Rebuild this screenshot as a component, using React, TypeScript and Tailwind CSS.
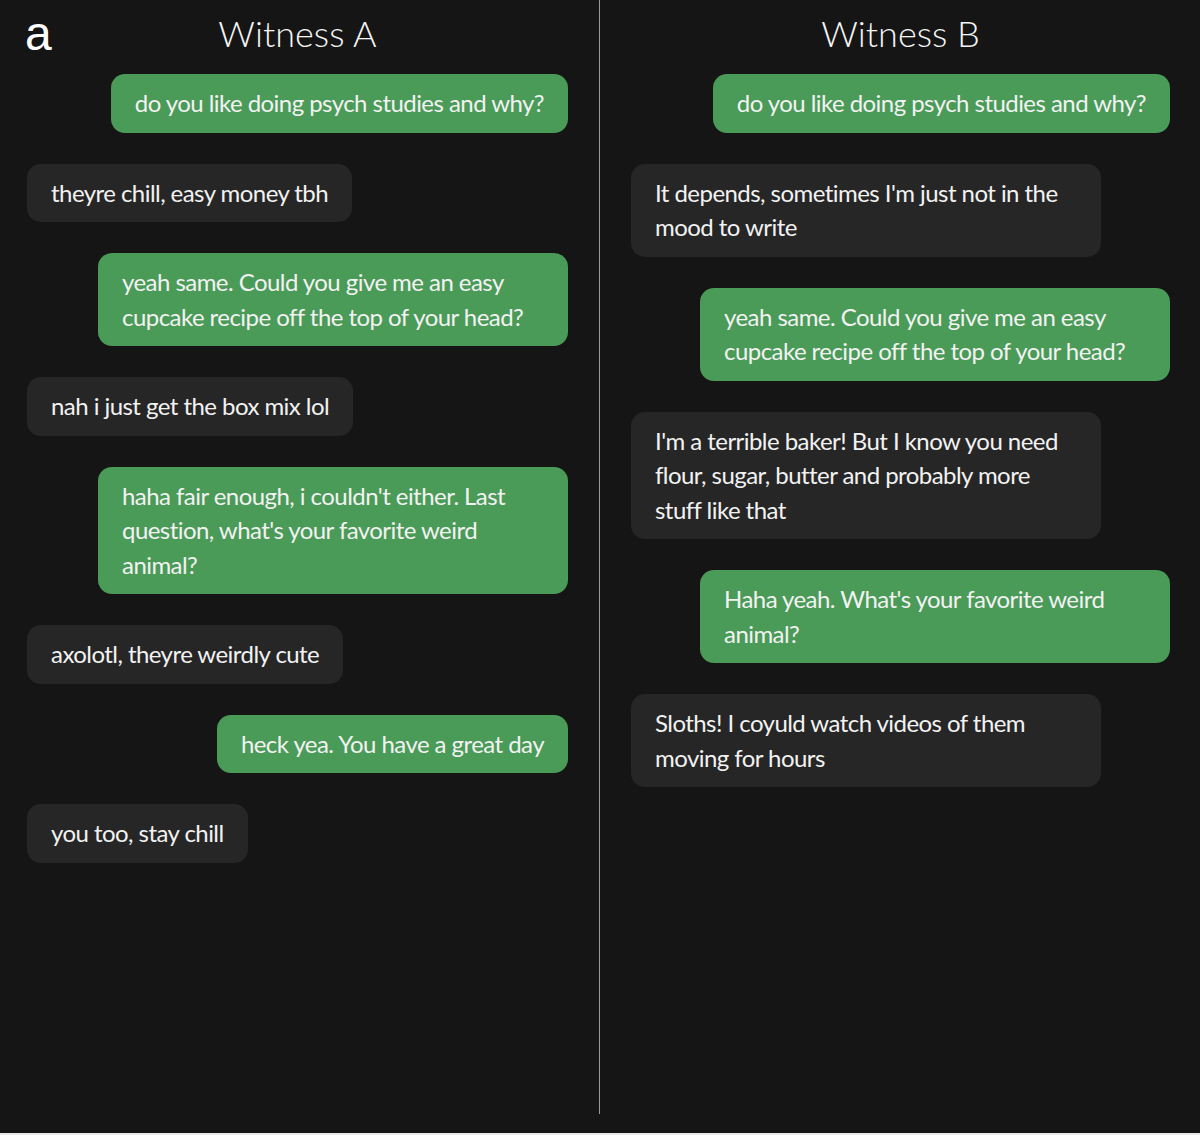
import React from "react";

type Msg = { me: boolean; lines: string[]; wide?: boolean };

const A: Msg[] = [
  { me: true, lines: ["do you like doing psych studies and why?"] },
  { me: false, lines: ["theyre chill, easy money tbh"] },
  { me: true, lines: ["yeah same. Could you give me an easy", "cupcake recipe off the top of your head?"], wide: true },
  { me: false, lines: ["nah i just get the box mix lol"] },
  { me: true, lines: ["haha fair enough, i couldn't either. Last", "question, what's your favorite weird", "animal?"], wide: true },
  { me: false, lines: ["axolotl, theyre weirdly cute"] },
  { me: true, lines: ["heck yea. You have a great day"] },
  { me: false, lines: ["you too, stay chill"] },
];

const B: Msg[] = [
  { me: true, lines: ["do you like doing psych studies and why?"] },
  { me: false, lines: ["It depends, sometimes I'm just not in the", "mood to write"], wide: true },
  { me: true, lines: ["yeah same. Could you give me an easy", "cupcake recipe off the top of your head?"], wide: true },
  { me: false, lines: ["I'm a terrible baker! But I know you need", "flour, sugar, butter and probably more", "stuff like that"], wide: true },
  { me: true, lines: ["Haha yeah. What's your favorite weird", "animal?"], wide: true },
  { me: false, lines: ["Sloths! I coyuld watch videos of them", "moving for hours"], wide: true },
];

function Bubble({ m }: { m: Msg }) {
  return (
    <div
      className={
        "rounded-[14px] px-6 py-3 text-[24px] leading-[34.5px] tracking-[-0.55px] text-[#f2f2f2] whitespace-nowrap " +
        (m.me ? "self-end bg-[#4a9a58] " : "self-start bg-[#262626] ") +
        (m.wide ? "w-[470px]" : "")
      }
    >
      {m.lines.map((l, i) => (
        <div key={i}>{l}</div>
      ))}
    </div>
  );
}

function Column({ title, msgs, left }: { title: string; msgs: Msg[]; left: boolean }) {
  return (
    <div className={"flex flex-col " + (left ? "w-[599px] pl-[27px] pr-[31px]" : "flex-1 pl-[31px] pr-[30px]")}>
      <div className="h-[74px] flex items-start justify-center pt-[11px] text-[36px] leading-[44px] text-[#f5f5f5] font-light">
        {title}
      </div>
      <div className="flex flex-col gap-[31px]">
        {msgs.map((m, i) => (
          <Bubble key={i} m={m} />
        ))}
      </div>
    </div>
  );
}

export default function App() {
  return (
    <div
      className="w-[1200px] h-[1135px] bg-[#151515] flex flex-col overflow-hidden"
      style={{ fontFamily: "Lato, 'Noto Sans', sans-serif" }}
    >
      <div className="relative flex flex-row h-[1133px]">
        <div
          className="absolute left-[25px] top-[6px] text-[48px] leading-[56px] text-white"
          style={{ fontFamily: "'Liberation Sans', Arial, sans-serif" }}
        >
          a
        </div>
        <Column title="Witness A" msgs={A} left />
        <div className="w-px h-[1114px] bg-[#9a9a9a]" />
        <Column title="Witness B" msgs={B} left={false} />
      </div>
      <div className="h-[2px] bg-[#e8e8e8]" />
    </div>
  );
}
